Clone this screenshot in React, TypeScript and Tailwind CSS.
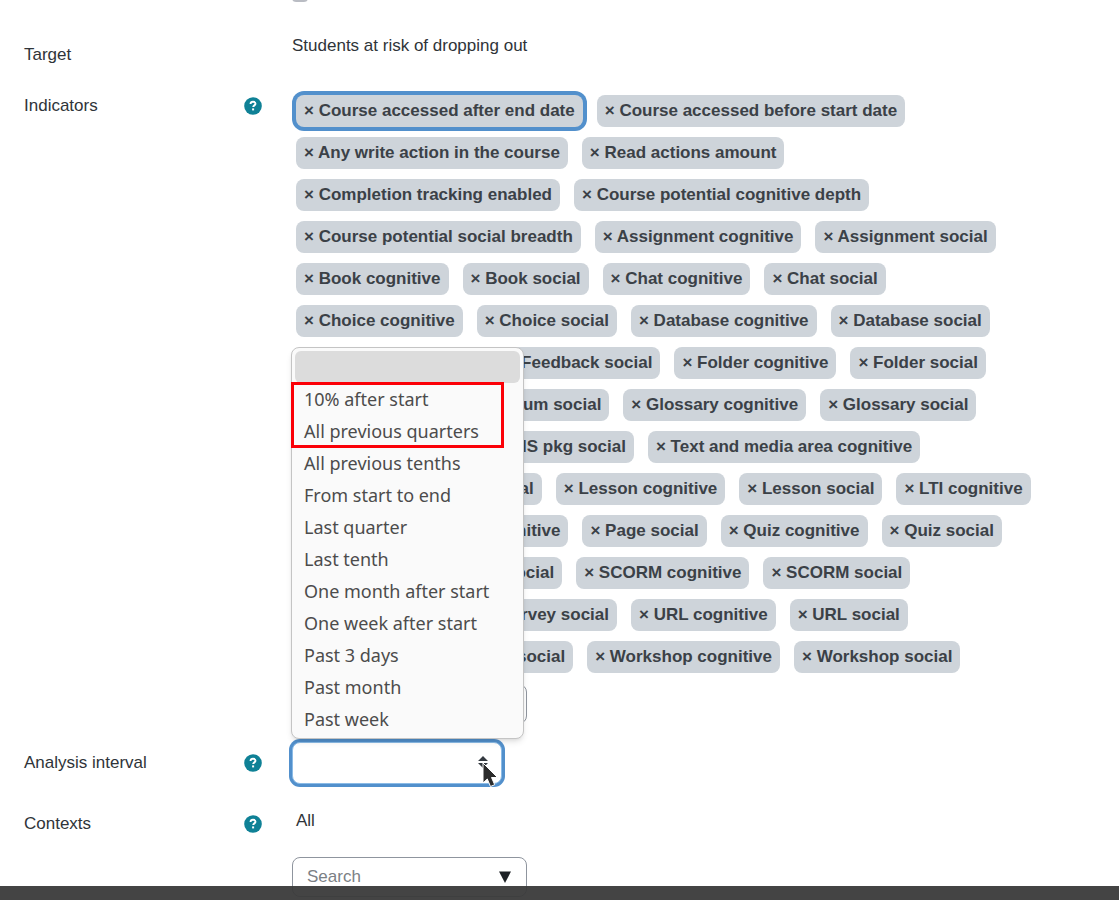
import type { ReactNode } from 'react';

const indicators = [
    'Course accessed after end date',
    'Course accessed before start date',
    'Any write action in the course',
    'Read actions amount',
    'Completion tracking enabled',
    'Course potential cognitive depth',
    'Course potential social breadth',
    'Assignment cognitive',
    'Assignment social',
    'Book cognitive',
    'Book social',
    'Chat cognitive',
    'Chat social',
    'Choice cognitive',
    'Choice social',
    'Database cognitive',
    'Database social',
    'Feedback cognitive',
    'Feedback social',
    'Folder cognitive',
    'Folder social',
    'Forum cognitive',
    'Forum social',
    'Glossary cognitive',
    'Glossary social',
    'IMS pkg cognitive',
    'IMS pkg social',
    'Text and media area cognitive',
    'Text and media area social',
    'Lesson cognitive',
    'Lesson social',
    'LTI cognitive',
    'LTI social',
    'Page cognitive',
    'Page social',
    'Quiz cognitive',
    'Quiz social',
    'File cognitive',
    'File social',
    'SCORM cognitive',
    'SCORM social',
    'Survey cognitive',
    'Survey social',
    'URL cognitive',
    'URL social',
    'Wiki cognitive',
    'Wiki social',
    'Workshop cognitive',
    'Workshop social',
];

const highlighted = ['10% after start', 'All previous quarters'];

const intervals = [
    'All previous tenths',
    'From start to end',
    'Last quarter',
    'Last tenth',
    'One month after start',
    'One week after start',
    'Past 3 days',
    'Past month',
    'Past week',
];

function HelpButton({ label }: { label: string }) {
    return (
        <button type="button" aria-label={`Help with ${label}`} className="h-[18px] w-[18px]">
            <svg viewBox="0 0 18 18" className="h-full w-full">
                <circle cx="9" cy="9" r="8.8" fill="#0f8196" />
                <path d="M6.500 7C6.600 5.500 7.600 4.800 9 4.800c1.500 0 2.500.8 2.500 2 0 1.600-2.300 1.600-2.300 3.300" fill="none" stroke="#fff" strokeWidth="1.900" />
                <rect x="8.100" y="11.400" width="2" height="2" fill="#fff" />
            </svg>
        </button>
    );
}

function Row({ label, htmlFor, help, children }: { label: string; htmlFor?: string; help?: boolean; children: ReactNode }) {
    return (
        <div className="grid grid-cols-[238px_1fr] gap-x-[30px]">
            <div className="flex items-center justify-between self-start pt-[9px]">
                {htmlFor ? <label htmlFor={htmlFor}>{label}</label> : <span>{label}</span>}
                {help && <HelpButton label={label} />}
            </div>
            <div>{children}</div>
        </div>
    );
}

function SearchBox({ id, label }: { id: string; label: string }) {
    return (
        <div className="relative w-[235px]">
            <input
                id={id}
                type="text"
                placeholder="Search"
                aria-label={label}
                className="block h-10 w-full rounded-lg border border-[#8f959e] bg-white pr-10 pl-3.5 placeholder:text-[#7b8085]"
            />
            <svg viewBox="0 0 12 12" className="pointer-events-none absolute top-3.5 right-4 h-3 w-3">
                <path d="M0 .5h12L6 12z" fill="#1d2125" />
            </svg>
        </div>
    );
}

function Option({ children }: { children?: ReactNode }) {
    return (
        <li role="option" aria-selected={false} className="h-8 px-[9px] leading-8">
            {children}
        </li>
    );
}

export default function App() {
    return (
        <div className="min-h-screen overflow-hidden bg-white font-['Liberation_Sans',Arial,sans-serif] text-[17px] leading-6 text-[#2f3439]">
            <form className="flex flex-col gap-[18px] pr-[72px] pl-6">
                <div className="mb-3.5 flex h-0.5 items-end overflow-hidden pl-[268px]">
                    <input type="checkbox" aria-label="Enabled" className="h-4 w-4 shrink-0 appearance-none rounded-sm border-2 border-[#b9bcc3]" />
                </div>

                <Row label="Target">
                    <p>Students at risk of dropping out</p>
                </Row>

                <Row label="Indicators" htmlFor="indicators" help>
                    <div className="mb-[11px] flex flex-wrap gap-x-3.5 gap-y-2.5 pt-2.5 pl-1">
                        {indicators.map((name, i) => (
                            <button
                                key={name}
                                type="button"
                                className={`h-8 rounded-lg bg-[#ced4da] px-2 font-bold whitespace-nowrap text-[#3b4147] ${i === 0 ? 'ring-4 ring-[#5290cc]' : ''}`}
                            >
                                × {name}
                            </button>
                        ))}
                    </div>
                    <SearchBox id="indicators" label="Indicators" />
                </Row>

                <Row label="Analysis interval" htmlFor="interval" help>
                    <div className="relative mb-px w-[210px]">
                        <select
                            id="interval"
                            defaultValue=""
                            className="block h-[42px] w-full appearance-none rounded-lg border border-[#8bbbe6] bg-white px-3 text-transparent ring-[3px] ring-[#5290cc]"
                        >
                            <option value=""></option>
                            {[...highlighted, ...intervals].map((name) => (
                                <option key={name}>{name}</option>
                            ))}
                        </select>
                        <svg viewBox="0 0 10 12" className="pointer-events-none absolute top-3.5 right-3.5 h-3 w-2.5">
                            <path d="M0 5L5 0l5 5zM0 7h10l-5 5z" fill="#343a40" />
                        </svg>

                        <ul
                            role="listbox"
                            aria-label="Analysis interval"
                            className="absolute bottom-full -left-px z-10 mb-[3px] w-[233px] rounded-lg border border-[#c4c4c4] bg-[#fafafa] p-[3px] font-['Noto_Sans',sans-serif] text-[18px] text-[#4c4c4c] shadow-md"
                        >
                            <li role="option" aria-selected className="h-8 rounded-md bg-[#dcdcdc]"></li>
                            {highlighted.map((name) => (
                                <Option key={name}>{name}</Option>
                            ))}
                            {intervals.map((name) => (
                                <Option key={name}>{name}</Option>
                            ))}
                            <li role="presentation" className="pointer-events-none absolute top-[34px] -left-px h-[66px] w-[213px] border-[3px] border-[#fb0007]"></li>
                        </ul>

                        {/* mouse pointer */}
                        <svg viewBox="0 0 16 26" className="pointer-events-none absolute top-5 right-1 z-20 h-[26px] w-4">
                            <path d="M1 1v20l4.300-4 3.200 7.500 4.200-1.800-3.200-7.200h6z" fill="#2b2b2b" stroke="#fff" strokeWidth="1" />
                        </svg>
                    </div>
                </Row>

                <Row label="Contexts" htmlFor="contexts" help>
                    <p className="mb-6 pt-1.5 pl-1">All</p>
                    <SearchBox id="contexts" label="Contexts" />
                </Row>
            </form>

            <footer className="fixed inset-x-0 bottom-0 h-3.5 bg-[#3a3a3a]/95"></footer>
        </div>
    );
}
